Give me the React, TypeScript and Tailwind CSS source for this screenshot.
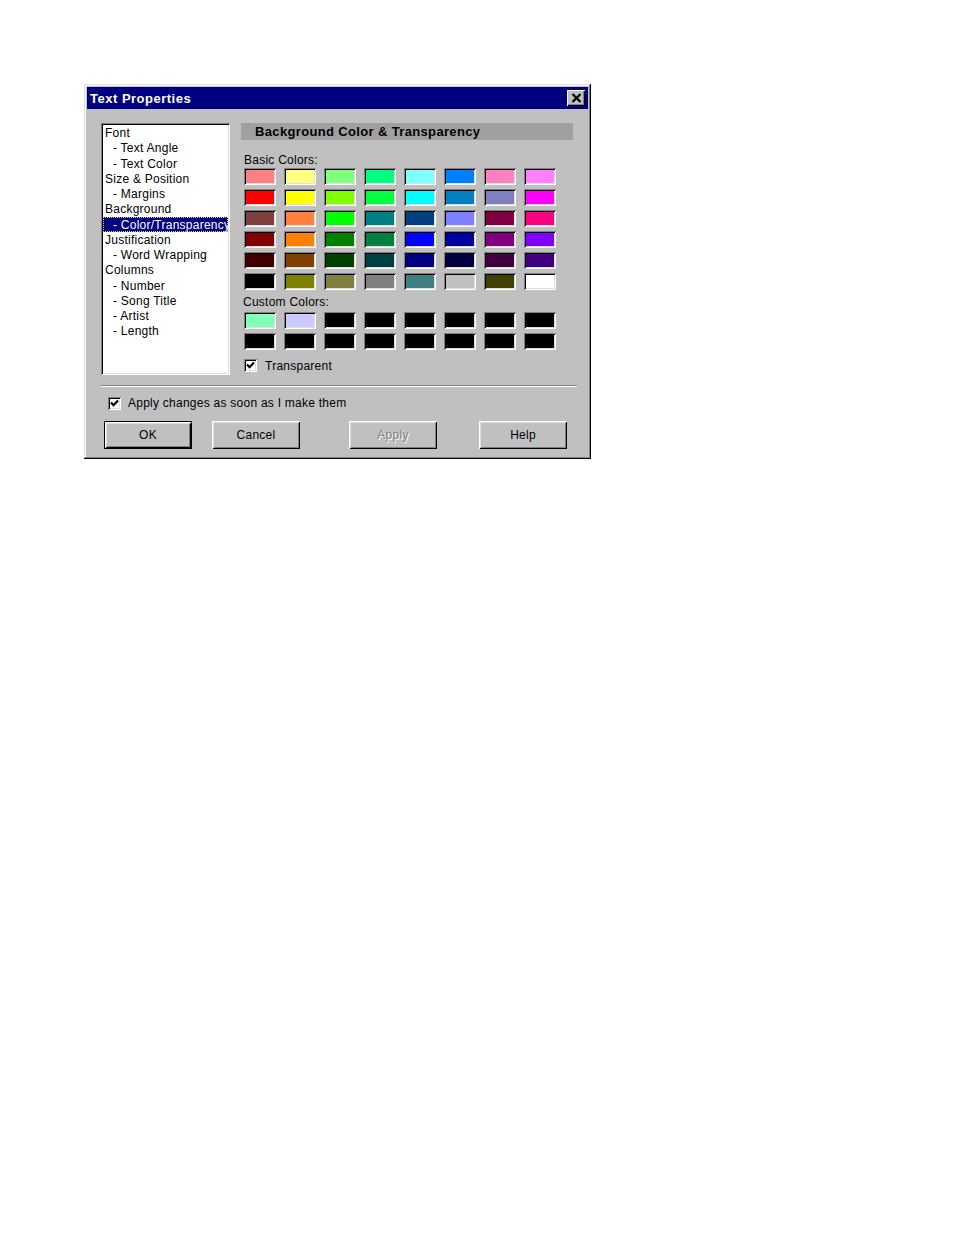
import React from "react";

const basic: string[] = [
  "bg-[#ff8080]", "bg-[#ffff80]", "bg-[#80ff80]", "bg-[#00ff80]", "bg-[#80ffff]", "bg-[#0080ff]", "bg-[#ff80c0]", "bg-[#ff80ff]",
  "bg-[#ff0000]", "bg-[#ffff00]", "bg-[#80ff00]", "bg-[#00ff40]", "bg-[#00ffff]", "bg-[#0080c0]", "bg-[#8080c0]", "bg-[#ff00ff]",
  "bg-[#804040]", "bg-[#ff8040]", "bg-[#00ff00]", "bg-[#008080]", "bg-[#004080]", "bg-[#8080ff]", "bg-[#800040]", "bg-[#ff0080]",
  "bg-[#800000]", "bg-[#ff8000]", "bg-[#008000]", "bg-[#008040]", "bg-[#0000ff]", "bg-[#0000a0]", "bg-[#800080]", "bg-[#8000ff]",
  "bg-[#400000]", "bg-[#804000]", "bg-[#004000]", "bg-[#004040]", "bg-[#000080]", "bg-[#000040]", "bg-[#400040]", "bg-[#400080]",
  "bg-[#000000]", "bg-[#808000]", "bg-[#808040]", "bg-[#808080]", "bg-[#408080]", "bg-[#c0c0c0]", "bg-[#404000]", "bg-[#ffffff]",
];

const custom: string[] = [
  "bg-[#80ffb8]", "bg-[#cacaff]", "bg-[#000000]", "bg-[#000000]", "bg-[#000000]", "bg-[#000000]", "bg-[#000000]", "bg-[#000000]",
  "bg-[#000000]", "bg-[#000000]", "bg-[#000000]", "bg-[#000000]", "bg-[#000000]", "bg-[#000000]", "bg-[#000000]", "bg-[#000000]",
];

const tree: { label: string; sub: boolean; sel?: boolean }[] = [
  { label: "Font", sub: false },
  { label: "- Text Angle", sub: true },
  { label: "- Text Color", sub: true },
  { label: "Size & Position", sub: false },
  { label: "- Margins", sub: true },
  { label: "Background", sub: false },
  { label: "- Color/Transparency", sub: true, sel: true },
  { label: "Justification", sub: false },
  { label: "- Word Wrapping", sub: true },
  { label: "Columns", sub: false },
  { label: "- Number", sub: true },
  { label: "- Song Title", sub: true },
  { label: "- Artist", sub: true },
  { label: "- Length", sub: true },
];

function Swatch({ cls }: { cls: string }) {
  return (
    <div
      className={
        "w-[32px] h-[17px] shadow-[inset_1px_1px_#808080,inset_-1px_-1px_#ffffff,inset_2px_2px_#000000,inset_-2px_-2px_#dfdfdf] " +
        cls
      }
    />
  );
}

function CheckBox() {
  return (
    <div className="w-[13px] h-[13px] bg-white flex items-center justify-center shadow-[inset_1px_1px_#808080,inset_-1px_-1px_#ffffff,inset_2px_2px_#000000,inset_-2px_-2px_#dfdfdf]">
      <svg width="9" height="9" viewBox="0 0 9 9" className="block">
        <path d="M1 3.5 L3.5 6.2 L8 1.5" stroke="#000" strokeWidth="2.2" fill="none" />
      </svg>
    </div>
  );
}

function Button({
  label,
  def,
  disabled,
}: {
  label: string;
  def?: boolean;
  disabled?: boolean;
}) {
  const inner = (
    <div
      className={
        "flex-1 flex items-center justify-center bg-[#c0c0c0] shadow-[inset_1px_1px_#ffffff,inset_-1px_-1px_#000000,inset_2px_2px_#dfdfdf,inset_-2px_-2px_#808080] " +
        (disabled
          ? "text-[#808080] [text-shadow:1px_1px_0_#ffffff]"
          : "text-black")
      }
    >
      {label}
    </div>
  );
  if (def) {
    return (
      <div className="w-[88px] h-[28px] flex border border-black">{inner}</div>
    );
  }
  return <div className="w-[88px] h-[28px] flex">{inner}</div>;
}

export default function App() {
  return (
    <div
      className="min-h-[1235px] bg-white pt-[84px] pl-[84px] text-[12px] tracking-[0.25px] text-black"
      style={{ fontFamily: '"Liberation Sans", Arial, sans-serif' }}
    >
      <div className="w-[507px] h-[375px] bg-[#c0c0c0] p-[3px] flex flex-col shadow-[inset_-1px_-1px_#000000,inset_1px_1px_#dfdfdf,inset_-2px_-2px_#808080,inset_2px_2px_#ffffff]">
        {/* Title bar */}
        <div className="h-[22px] bg-[#000080] flex items-center justify-between pl-[3px] pr-[3px]">
          <span className="text-white font-bold text-[13px] tracking-[0.5px] leading-none">
            Text Properties
          </span>
          <div className="w-[18px] h-[16px] bg-[#c0c0c0] flex items-center justify-center shadow-[inset_1px_1px_#ffffff,inset_-1px_-1px_#000000,inset_-2px_-2px_#808080]">
            <svg width="11" height="10" viewBox="0 0 11 10" className="block">
              <path d="M1.5 1 L9.5 9 M9.5 1 L1.5 9" stroke="#000" strokeWidth="2.3" />
            </svg>
          </div>
        </div>

        {/* Body */}
        <div className="flex mt-[14px] ml-[14px]">
          {/* Tree */}
          <div className="w-[129px] h-[252px] bg-white p-[2px] overflow-hidden shadow-[inset_1px_1px_#808080,inset_-1px_-1px_#ffffff,inset_2px_2px_#000000,inset_-2px_-2px_#dfdfdf]">
            <div className="whitespace-nowrap">
              {tree.map((t, i) => (
                <div
                  key={i}
                  className={
                    "leading-[15.25px] h-[15.25px] " +
                    (t.sub ? "pl-[10px] " : "pl-[2px] ") +
                    (t.sel
                      ? "bg-[#000080] text-white outline-1 outline-dotted outline-[#d8d890] -outline-offset-1"
                      : "")
                  }
                >
                  <span className="relative top-[1px]">{t.label}</span>
                </div>
              ))}
            </div>
          </div>

          {/* Right panel */}
          <div className="ml-[11px] w-[332px] flex flex-col">
            <div className="h-[17px] bg-[#a0a0a0] flex items-center pl-[14px]">
              <span className="font-bold text-[13px] tracking-[0.35px] leading-none">
                Background Color &amp; Transparency
              </span>
            </div>
            <div className="ml-[3px] mt-[13px] h-[15px] leading-[15px]">Basic Colors:</div>
            <div className="ml-[3px] mt-[0px] grid grid-cols-[repeat(8,32px)] gap-x-[8px] gap-y-[4px]">
              {basic.map((c, i) => (
                <Swatch key={i} cls={c} />
              ))}
            </div>
            <div className="ml-[2px] mt-[5px] h-[15px] leading-[15px]">Custom Colors:</div>
            <div className="ml-[3px] mt-[2px] grid grid-cols-[repeat(8,32px)] gap-x-[8px] gap-y-[4px]">
              {custom.map((c, i) => (
                <Swatch key={i} cls={c} />
              ))}
            </div>
            <div className="ml-[3px] mt-[8px] flex items-center h-[14px]">
              <CheckBox />
              <span className="ml-[8px] leading-[14px] relative top-[1px]">Transparent</span>
            </div>
          </div>
        </div>

        {/* Separator */}
        <div className="mt-[10px] ml-[14px] w-[476px] h-[2px] flex flex-col">
          <div className="h-[1px] bg-[#808080]" />
          <div className="h-[1px] bg-white" />
        </div>

        {/* Apply checkbox */}
        <div className="mt-[10px] ml-[21px] flex items-center h-[13px]">
          <CheckBox />
          <span className="ml-[7px] leading-[13px]">Apply changes as soon as I make them</span>
        </div>

        {/* Buttons */}
        <div className="mt-[11px] ml-[17px] flex">
          <Button label="OK" def />
          <div className="w-[20px]" />
          <Button label="Cancel" />
          <div className="w-[49px]" />
          <Button label="Apply" disabled />
          <div className="w-[42px]" />
          <Button label="Help" />
        </div>
      </div>
    </div>
  );
}
